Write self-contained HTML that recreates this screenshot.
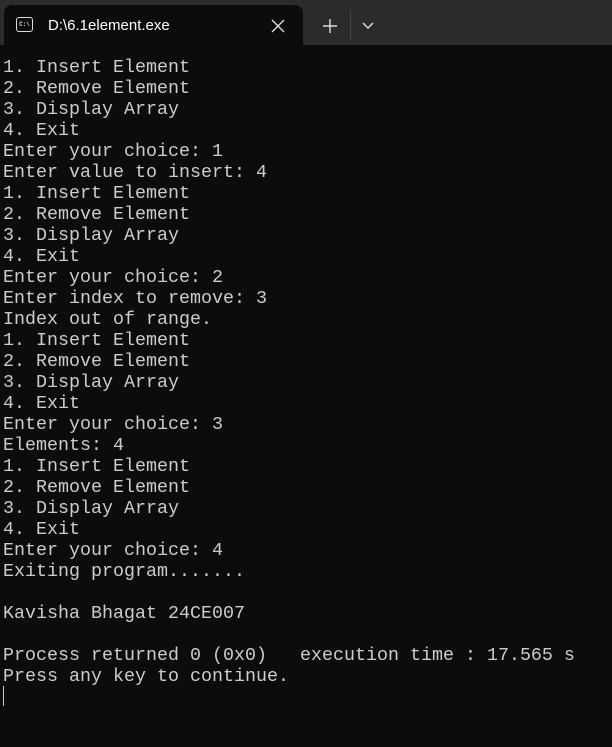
<!DOCTYPE html>
<html><head><style>
body{margin:0;width:612px;height:747px;background:#0c0c0c;overflow:hidden;position:relative}
.bar{position:absolute;left:0;top:0;width:612px;height:45px;background:#2b2b2b}
.tab{position:absolute;left:4px;top:5px;width:299px;height:40px;background:#0c0c0c;border-radius:8px 8px 0 0}
.title{position:absolute;left:48px;top:17px;font:15px "Liberation Sans",sans-serif;color:#fff}
.icon{position:absolute;left:16px;top:17px;width:17px;height:15px;border:1.5px solid #ddd;border-radius:3px;box-sizing:border-box;font:bold 6px "Liberation Mono",monospace;color:#ddd;line-height:13px;text-align:center}
pre{position:absolute;left:3px;top:57px;margin:0;font:18.33px/21px "Liberation Mono",monospace;color:#cccccc}
.cur{position:absolute;left:3px;top:686px;width:1px;height:20px;background:#ccc}
</style></head><body>
<div class="bar"></div>
<div class="tab"></div>
<div class="icon">C:\</div>
<div class="title">D:\6.1element.exe</div>
<svg style="position:absolute;left:271px;top:19px" width="14" height="14"><path d="M1 1L13 13M13 1L1 13" stroke="#ddd" stroke-width="1.4"/></svg>
<svg style="position:absolute;left:323px;top:19px" width="14" height="14"><path d="M7 0V14M0 7H14" stroke="#ddd" stroke-width="1.4"/></svg>
<div style="position:absolute;left:350px;top:10px;width:1px;height:30px;background:#444"></div>
<svg style="position:absolute;left:362px;top:22px" width="12" height="8"><path d="M1 1L6 6L11 1" stroke="#ddd" stroke-width="1.4" fill="none"/></svg>
<pre>1. Insert Element
2. Remove Element
3. Display Array
4. Exit
Enter your choice: 1
Enter value to insert: 4
1. Insert Element
2. Remove Element
3. Display Array
4. Exit
Enter your choice: 2
Enter index to remove: 3
Index out of range.
1. Insert Element
2. Remove Element
3. Display Array
4. Exit
Enter your choice: 3
Elements: 4
1. Insert Element
2. Remove Element
3. Display Array
4. Exit
Enter your choice: 4
Exiting program.......

Kavisha Bhagat 24CE007

Process returned 0 (0x0)   execution time : 17.565 s
Press any key to continue.</pre>
<div class="cur"></div>
</body></html>
